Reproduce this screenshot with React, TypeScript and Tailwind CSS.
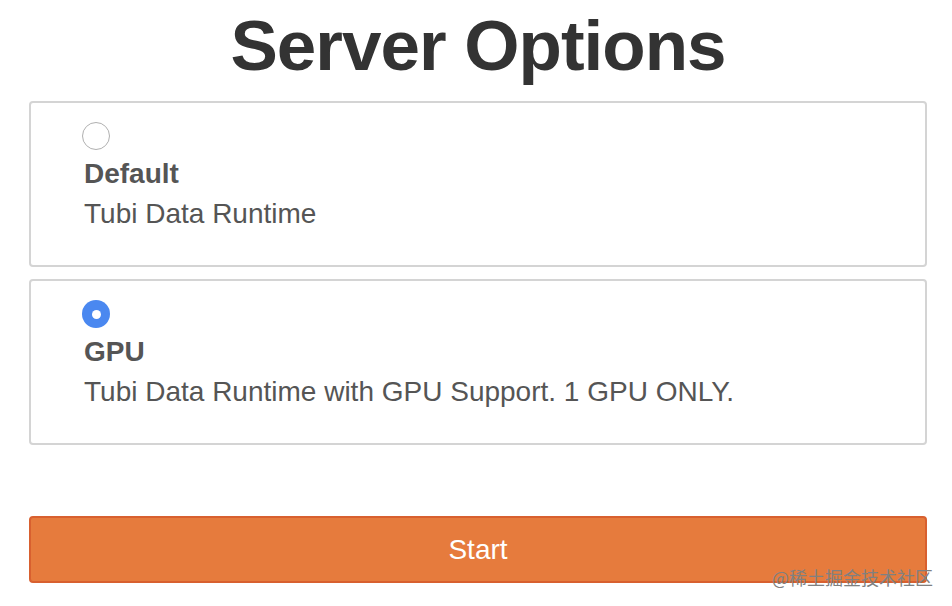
const options = [
  { name: "Default", desc: "Tubi Data Runtime", checked: false },
  { name: "GPU", desc: "Tubi Data Runtime with GPU Support. 1 GPU ONLY.", checked: true },
];

function Radio({ checked }: { checked: boolean }) {
  if (checked) {
    return (
      <div className="w-[28px] h-[28px] rounded-full bg-[#4a88f0] flex items-center justify-center">
        <div className="w-[9px] h-[9px] rounded-full bg-white" />
      </div>
    );
  }
  return <div className="w-[28px] h-[28px] rounded-full border-[1.5px] border-[#b0b0b0] bg-white" />;
}

export default function App() {
  return (
    <div className="relative w-[952px] h-[606px] bg-white overflow-hidden font-['Liberation_Sans',Arial,sans-serif]">
      <div className="ml-[29px] w-[898px] flex flex-col">
        <h1 className="mt-[10px] h-[71px] text-center text-[71px] leading-[71px] font-bold tracking-[-1px] text-[#333333]">
          Server Options
        </h1>

        <div className="mt-[20px] flex flex-col gap-[12px]">
          {options.map((o) => (
            <div
              key={o.name}
              className="border-2 border-[#d4d4d4] rounded-[4px] pt-[19px] pb-[31px] pl-[51px] text-[#555555]"
            >
              <Radio checked={o.checked} />
              <div className="ml-[2px] mt-[4px] text-[28px] leading-[40px] font-bold">{o.name}</div>
              <div className="ml-[2px] text-[28px] leading-[40px]">{o.desc}</div>
            </div>
          ))}
        </div>

        <button className="mt-[71px] h-[67px] w-full rounded-[4px] border-2 border-[#d8602f] bg-[#e67b3d] text-white text-[28px]">
          Start
        </button>
      </div>

      <div className="absolute left-[772px] top-[566px] text-[18px] leading-[22px] text-[#808080] font-['Noto_Sans_CJK_SC',sans-serif]">
        @稀土掘金技术社区
      </div>
    </div>
  );
}
